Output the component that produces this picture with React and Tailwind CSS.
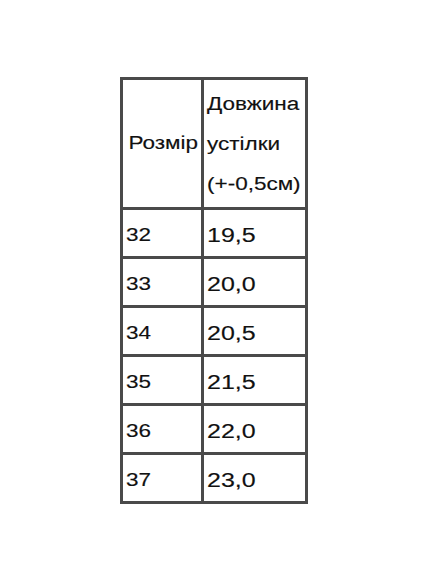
import React from 'react';

const rows = [
  ['32', '19,5'],
  ['33', '20,0'],
  ['34', '20,5'],
  ['35', '21,5'],
  ['36', '22,0'],
  ['37', '23,0'],
];

// the source picture is stretched sideways, so glyphs get a horizontal scale
function Wide({ children, className = '' }) {
  return <span className={`inline-block origin-left scale-x-[1.25] ${className}`}>{children}</span>;
}

export default function App() {
  const cell = 'border-[3px] border-[#4a4a4a] px-[3px] text-left';

  return (
    <div
      className="w-[428px] h-[570px] bg-white pt-[77px] pl-[120px] text-[#111] [-webkit-text-stroke:0.15px_#111]"
      style={{ fontFamily: '"Liberation Sans", Arial, sans-serif' }}
    >
      <table className="border-collapse w-[188px]">
        <tbody>
          <tr className="h-[130px]">
            <td className={`${cell} w-[81px] align-middle text-[18px]`}>
              <Wide className="pl-[2px]">Розмір</Wide>
            </td>
            <td className={`${cell} align-middle text-[18px] leading-[40px]`}>
              <div><Wide>Довжина</Wide></div>
              <div><Wide>устілки</Wide></div>
              <div><Wide>(+-0,5см)</Wide></div>
            </td>
          </tr>
          {rows.map(([size, len]) => (
            <tr key={size} className="h-[49px]">
              <td className={`${cell} align-middle text-[18px] pt-[4px]`}>
                <Wide>{size}</Wide>
              </td>
              <td className={`${cell} align-middle text-[20px] pt-[4px]`}>
                <Wide>{len}</Wide>
              </td>
            </tr>
          ))}
        </tbody>
      </table>
    </div>
  );
}
